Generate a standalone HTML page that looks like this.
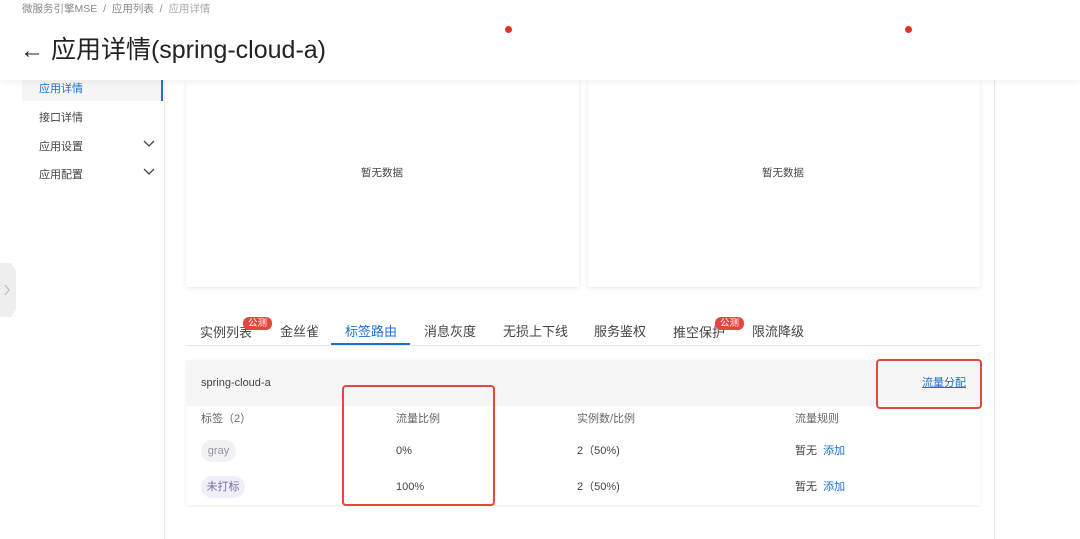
<!DOCTYPE html>
<html><head><meta charset="utf-8"><style>
*{margin:0;padding:0;box-sizing:border-box}
body{width:1080px;height:539px;overflow:hidden;background:#fff;font-family:"Liberation Sans","Noto Sans CJK SC",sans-serif;position:relative;color:#333}
.a{position:absolute}
.t{font-size:11px;color:#444;white-space:nowrap;line-height:14px}
</style></head><body>
<div class="a" style="left:0;top:0;width:1080px;height:80px;background:#fff;box-shadow:0 2px 6px rgba(0,0,0,.06);z-index:2"></div>
<div class="a t" style="left:22px;top:2px;font-size:10.5px;color:#888;z-index:3">微服务引擎MSE &nbsp;/&nbsp; 应用列表 &nbsp;/&nbsp; <span style="color:#aaa">应用详情</span></div>
<div class="a" style="left:20px;top:34px;font-size:25px;line-height:32px;color:#222;z-index:3;white-space:nowrap"><span style="font-size:24px">←</span> 应用详情(spring-cloud-a)</div>
<div class="a" style="left:505px;top:26px;width:7px;height:7px;border-radius:50%;background:#e0312b;z-index:3"></div>
<div class="a" style="left:905px;top:26px;width:7px;height:7px;border-radius:50%;background:#e0312b;z-index:3"></div>

<div class="a" style="left:164px;top:80px;width:1px;height:459px;background:#e8e8e8"></div>
<div class="a" style="left:22px;top:80px;width:141px;height:21px;background:#f5f5f5;border-right:2px solid #1f6fd0"></div>
<div class="a t" style="left:39px;top:82px;color:#1f6fd0">应用详情</div>
<div class="a t" style="left:39px;top:111px">接口详情</div>
<div class="a t" style="left:39px;top:140px">应用设置</div>
<div class="a t" style="left:39px;top:168px">应用配置</div>
<svg class="a" style="left:143px;top:140px" width="12" height="8"><path d="M1 1l5 5 5-5" fill="none" stroke="#444" stroke-width="1.3"/></svg>
<svg class="a" style="left:143px;top:168px" width="12" height="8"><path d="M1 1l5 5 5-5" fill="none" stroke="#444" stroke-width="1.3"/></svg>
<div class="a" style="left:0;top:263px;width:16px;height:54px;background:#eee;clip-path:polygon(0 0,70% 0,100% 15%,100% 85%,70% 100%,0 100%)"></div>
<svg class="a" style="left:4px;top:284px" width="7" height="12"><path d="M1 1l4 5-4 5" fill="none" stroke="#bbb" stroke-width="1.2"/></svg>

<div class="a" style="left:994px;top:80px;width:1px;height:459px;background:#e8e8e8"></div>
<div class="a" style="left:186px;top:80px;width:393px;height:207px;background:#fff;box-shadow:0 1px 4px rgba(0,0,0,.1)"></div>
<div class="a" style="left:588px;top:80px;width:392px;height:207px;background:#fff;box-shadow:0 1px 4px rgba(0,0,0,.1)"></div>
<div class="a t" style="left:361px;top:166px;font-size:10.5px">暂无数据</div>
<div class="a t" style="left:762px;top:166px;font-size:10.5px">暂无数据</div>

<div class="a" style="left:186px;top:345px;width:794px;height:1px;background:#e6e6e6"></div>
<div class="a" style="left:331px;top:343px;width:79px;height:2px;background:#1f6fd0"></div>
<div class="a t" style="left:200px;top:324px;font-size:13px;line-height:17px;color:#444">实例列表</div>
<div class="a" style="left:243px;top:317px;width:29px;height:13px;border-radius:6px;background:#e5473f;color:#fff;font-size:9.5px;text-align:center;line-height:13px">公测</div>
<div class="a t" style="left:280px;top:323px;font-size:13px;line-height:17px;color:#444">金丝雀</div>
<div class="a t" style="left:345px;top:323px;font-size:13px;line-height:17px;color:#1f6fd0">标签路由</div>
<div class="a t" style="left:424px;top:323px;font-size:13px;line-height:17px;color:#444">消息灰度</div>
<div class="a t" style="left:503px;top:323px;font-size:13px;line-height:17px;color:#444">无损上下线</div>
<div class="a t" style="left:594px;top:323px;font-size:13px;line-height:17px;color:#444">服务鉴权</div>
<div class="a t" style="left:673px;top:324px;font-size:13px;line-height:17px;color:#444">推空保护</div>
<div class="a" style="left:715px;top:317px;width:29px;height:13px;border-radius:6px;background:#e5473f;color:#fff;font-size:9.5px;text-align:center;line-height:13px">公测</div>
<div class="a t" style="left:752px;top:323px;font-size:13px;line-height:17px;color:#444">限流降级</div>

<div class="a" style="left:186px;top:360px;width:794px;height:145px;background:#fff;box-shadow:0 1px 3px rgba(0,0,0,.08)"></div>
<div class="a" style="left:186px;top:360px;width:794px;height:46px;background:#f6f6f6"></div>
<div class="a t" style="left:201px;top:376px">spring-cloud-a</div>
<div class="a t" style="left:922px;top:376px;color:#1f6fd0;text-decoration:underline">流量分配</div>
<div class="a t" style="left:201px;top:412px;color:#666">标签（2）</div>
<div class="a t" style="left:396px;top:412px;color:#666">流量比例</div>
<div class="a t" style="left:577px;top:412px;color:#666">实例数/比例</div>
<div class="a t" style="left:795px;top:412px;color:#666">流量规则</div>
<div class="a t" style="left:201px;top:440px;width:35px;height:22px;border-radius:11px;background:#f0f0f5;color:#999;text-align:center;line-height:22px">gray</div>
<div class="a t" style="left:201px;top:476px;width:44px;height:22px;border-radius:11px;background:#f0eef8;color:#7a6bb0;text-align:center;line-height:22px">未打标</div>
<div class="a t" style="left:396px;top:444px">0%</div>
<div class="a t" style="left:396px;top:480px">100%</div>
<div class="a t" style="left:577px;top:444px">2（50%)</div>
<div class="a t" style="left:577px;top:480px">2（50%)</div>
<div class="a t" style="left:795px;top:444px">暂无 &nbsp;<span style="color:#1f6fd0">添加</span></div>
<div class="a t" style="left:795px;top:480px">暂无 &nbsp;<span style="color:#1f6fd0">添加</span></div>

<div class="a" style="left:342px;top:385px;width:153px;height:121px;border:2.5px solid #e5473f;border-radius:4px"></div>
<div class="a" style="left:876px;top:359px;width:106px;height:50px;border:2.5px solid #e5473f;border-radius:4px"></div>
</body></html>
